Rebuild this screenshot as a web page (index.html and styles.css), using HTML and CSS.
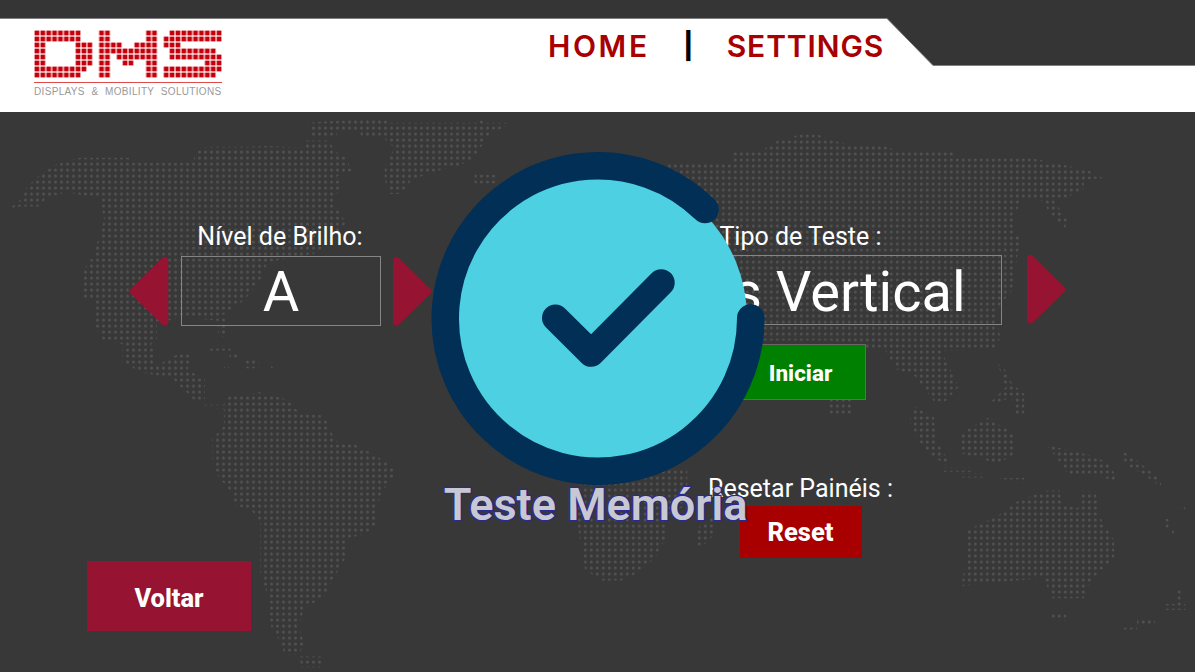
FILE: index.html
```html
<!DOCTYPE html>
<html lang="pt-BR">
<head>
  <meta charset="UTF-8">
  <title>DMS - Teste Memória</title>
  <link rel="stylesheet" href="styles.css">
</head>
<body>
  <div class="page">
    <header class="topbar">
      <!-- faixa escura com o canto cortado -->
      <svg class="topbar-cut" viewBox="0 0 1195 67" aria-hidden="true">
        <polygon class="cut-fill" points="0,0 1195,0 1195,65.5 933,65.5 887,18.5 0,18.5"/>
        <polyline class="cut-line" points="0,18.5 887,18.5 933,65.5 1195,65.5"/>
      </svg>
      <div class="logo">
        <svg class="logo-mark" viewBox="0 0 32 8" preserveAspectRatio="none" role="img" aria-label="DMS">
          <defs>
            <pattern id="cell" patternUnits="userSpaceOnUse" width="1" height="1">
              <rect x="0.1" y="0.1" width="0.8" height="0.8" fill="#c5000b"/>
            </pattern>
          </defs>
          <g fill="url(#cell)">
            <!-- D -->
            <rect x="0" y="0" width="8" height="2"/>
            <rect x="0" y="2" width="2" height="4"/>
            <rect x="7" y="2" width="3" height="4"/>
            <rect x="0" y="6" width="9" height="1"/>
            <rect x="0" y="7" width="8" height="1"/>
            <!-- M -->
            <rect x="11" y="0" width="2" height="8"/>
            <rect x="19" y="0" width="2" height="8"/>
            <rect x="13" y="2" width="2" height="1"/>
            <rect x="17" y="2" width="2" height="1"/>
            <rect x="13" y="3" width="6" height="1"/>
            <rect x="14" y="4" width="5" height="1"/>
            <rect x="15" y="5" width="2" height="1"/>
            <!-- S -->
            <rect x="23" y="0" width="9" height="1"/>
            <rect x="22" y="1" width="10" height="1"/>
            <rect x="22" y="2" width="3" height="1"/>
            <rect x="23" y="3" width="8" height="1"/>
            <rect x="23" y="4" width="9" height="1"/>
            <rect x="29" y="5" width="3" height="1"/>
            <rect x="22" y="6" width="10" height="1"/>
            <rect x="22" y="7" width="9" height="1"/>
          </g>
        </svg>
        <div class="logo-text">DISPLAYS &amp; MOBILITY SOLUTIONS</div>
      </div>
      <nav class="menu">
        <a class="menu-link menu-home">HOME</a>
        <span class="menu-sep">|</span>
        <a class="menu-link menu-settings">SETTINGS</a>
      </nav>
    </header>

    <main class="content">
      <!-- mapa de pontos do fundo -->
      <svg class="worldmap" viewBox="0 112 1195 560" aria-hidden="true">
        <defs>
          <pattern id="dots-west" patternUnits="userSpaceOnUse" width="6" height="6">
            <circle cx="1.5" cy="2" r="1.5" fill="#505050"/>
          </pattern>
          <pattern id="dots-east" patternUnits="userSpaceOnUse" width="6" height="6">
            <circle cx="3.3" cy="4" r="1.5" fill="#505050"/>
          </pattern>
          <clipPath id="land">
            <path transform="translate(0,112) scale(.3827,.357)" d="M25,270 L60,240 L70,210 L105,175 L150,145 L210,128 L345,128 L345,142 L505,142 L510,110 L540,97 L650,97 L700,95 L790,100 L800,80 L860,80 L875,110 L905,130 L920,165 L880,180 L895,210 L870,240 L880,270 L905,310 L830,395 L700,420 L680,470 L640,525 L580,570 L595,585 L595,630 L570,630 L570,585 L480,575 L410,590 L410,635 L395,650 L410,710 L470,675 L500,675 L490,725 L535,745 L535,810 L510,810 L450,745 L370,730 L320,700 L320,650 L270,640 L245,590 L250,525 L213,520 L213,450 L240,410 L262,340 L272,300 L260,240 L210,232 L175,225 L120,240 L105,265 L50,265 L25,280 Z
              M1005,15 L1015,30 L1245,30 L1255,15 L1265,30 L1325,30 L1325,40 L1280,60 L1250,110 L1230,135 L1200,150 L1140,165 L1075,190 L1050,230 L1020,230 L1005,190 L1005,160 L1030,100 L1005,75 L945,70 L940,55 L880,55 L880,70 L815,70 L805,30 Z
              M1240,175 H1295 V200 H1240 Z
              M540,655 H610 V668 H540 Z M600,675 H625 V688 H600 Z M585,705 H598 V718 H585 Z M635,690 H675 V718 H635 Z M708,705 H720 V718 H708 Z
              M600,795 L680,785 L750,805 L785,845 L845,850 L860,880 L875,920 L925,930 L970,955 L1030,995 L1030,1020 L1000,1060 L985,1100 L985,1150 L965,1180 L905,1195 L905,1245 L875,1300 L845,1360 L795,1390 L780,1440 L795,1490 L780,1520 L745,1520 L725,1470 L710,1450 L695,1340 L680,1300 L680,1150 L660,1120 L615,1100 L600,1060 L570,1020 L555,980 L555,915 L585,880 L585,832 L525,830 L525,820 L585,820 Z
              M785,1525 H845 V1555 H785 Z"/>
            <path transform="translate(600,112) scale(.3795,.357)" d="M345,112 L430,112 L440,95 L470,80 L530,62 L570,62 L630,85 L690,95 L750,95 L790,112 L930,112 L930,128 L1130,128 L1210,145 L1290,165 L1325,185 L1275,190 L1275,215 L1230,240 L1190,240 L1230,300 L1225,330 L1180,275 L1170,250 L1110,245 L1090,300 L1090,335 L1110,350 L1100,400 L1085,500 L1040,560 L1055,630 L1040,665 L900,670 L945,770 L910,810 L880,810 L830,740 L780,720 L750,665 L700,665 L610,640 L300,640 L180,300 L180,145 L345,145 Z
              M605,805 H665 V845 H605 Z
              M-50,1000 L230,1000 L230,1100 L175,1130 L175,1190 L145,1250 L100,1290 L60,1312 L0,1312 L-40,1280 L-60,1150 Z
              M250,1170 L305,1130 L305,1180 L270,1215 L250,1215 Z
              M815,865 L830,825 L880,855 L885,920 L915,970 L915,990 L870,960 L840,920 Z
              M950,900 L1030,852 L1040,870 L1090,900 L1090,960 L1050,985 L950,955 Z
              M905,995 H980 V1008 H905 Z M950,1012 H1010 V1024 H950 Z M1055,1025 H1118 V1038 H1055 Z
              M1048,708 L1060,708 L1085,760 L1118,790 L1118,845 L1095,845 L1085,800 L1050,812 L1030,812 L1070,770 Z
              M1175,932 L1240,948 L1305,965 L1340,985 L1370,1037 L1320,1022 L1235,1017 L1205,970 Z
              M1375,948 L1400,965 L1478,1030 L1478,1052 L1440,1020 L1390,990 L1375,965 Z
              M1175,1060 L1212,1060 L1215,1100 L1260,1110 L1270,1062 L1305,1062 L1320,1140 L1355,1200 L1355,1250 L1300,1305 L1285,1330 L1275,1362 L1190,1362 L1170,1305 L1000,1322 L955,1328 L955,1305 L970,1240 L970,1170 L1050,1130 L1090,1095 Z
              M1188,1402 H1228 V1425 H1188 Z
              M1375,1445 H1415 V1458 H1375 Z M1415,1420 H1462 V1440 H1415 Z M1485,1378 H1542 V1395 H1485 Z M1515,1338 H1530 V1378 H1515 Z
              M1485,1140 H1498 V1168 H1485 Z M1500,1172 H1512 V1185 H1500 Z M1530,1108 H1542 V1120 H1530 Z"/>
          </clipPath>
        </defs>
        <g clip-path="url(#land)">
          <rect x="0" y="112" width="560" height="560" fill="url(#dots-west)"/>
          <rect x="560" y="112" width="635" height="560" fill="url(#dots-east)"/>
        </g>
      </svg>

      <section class="col-left">
        <div class="field">
          <label class="field-label">Nível de Brilho:</label>
          <div class="stepper">
            <svg class="arrow" viewBox="0 0 39 69" aria-hidden="true"><polygon points="34.8,3.5 34.8,65 3.5,34.5"/></svg>
            <div class="valuebox valuebox-small">A</div>
            <svg class="arrow" viewBox="0 0 39 69" aria-hidden="true"><polygon points="3.5,3.5 3.5,65 35,34.5"/></svg>
          </div>
        </div>
        <button class="btn btn-back">Voltar</button>
      </section>

      <section class="col-right">
        <div class="stepper">
          <div class="stack">
            <label class="field-label">Tipo de Teste :</label>
            <div class="valuebox valuebox-wide">Linhas Vertical</div>
          </div>
          <svg class="arrow arrow-end" viewBox="0 0 39 69" aria-hidden="true"><polygon points="3.5,3.5 3.5,65 35,34.5"/></svg>
        </div>
        <div class="stack">
          <button class="btn btn-start">Iniciar</button>
          <label class="field-label label-reset">Resetar Painéis :</label>
          <button class="btn btn-reset">Reset</button>
        </div>
      </section>

      <!-- aviso por cima da tela -->
      <div class="overlay">
        <svg class="overlay-icon" viewBox="0 0 334 334" aria-hidden="true">
          <circle class="icon-disc" cx="167" cy="167" r="149"/>
          <path class="icon-ring" d="M319.75 167 A152.75 152.75 0 1 1 274 58.5"/>
          <polyline class="icon-check" points="124.5,167 160.2,202.3 230.2,131.7"/>
        </svg>
        <div class="overlay-title">Teste Memória</div>
      </div>
    </main>
  </div>
</body>
</html>
```

FILE: styles.css
```css
* {
  box-sizing: border-box;
}
html, body {
  margin: 0;
  height: 100%;
}
body {
  font-family: Roboto, "Liberation Sans", sans-serif;
  background-color: #383838;
  color: #fff;
  overflow: hidden;
}
.page {
  width: 1195px;
  height: 672px;
  display: flex;
  flex-direction: column;
}

/* topo */
.topbar {
  position: relative;
  height: 112px;
  flex: none;
  background: #fff;
  display: flex;
  align-items: flex-start;
  padding: 30px 0 0 34px;
}
.topbar-cut {
  position: absolute;
  left: 0;
  top: 0;
  width: 1195px;
  height: 67px;
}
.cut-fill {
  fill: #353535;
}
.cut-line {
  fill: none;
  stroke: #808080;
  stroke-width: 1;
}
.logo {
  position: relative;
  width: 188px;
}
.logo-mark {
  display: block;
  width: 188px;
  height: 48px;
}
.logo-text {
  margin-top: 4px;
  padding-top: 3px;
  border-top: 1px solid #e04a4a;
  font-family: "Liberation Sans", Arial, sans-serif;
  font-size: 10px;
  line-height: 12px;
  color: #999;
  white-space: nowrap;
  letter-spacing: 0.33px;
  word-spacing: 3.5px;
}
.menu {
  position: relative;
  margin: -2px 0 0 326px;
  display: flex;
  align-items: center;
  font-family: Inter, "Open Sans", sans-serif;
  font-size: 30px;
  line-height: 36px;
  font-weight: 600;
}
.menu-link {
  color: #a80000;
}
.menu-home {
  letter-spacing: 2.6px;
}
.menu-settings {
  letter-spacing: 0.9px;
}
.menu-sep {
  width: 77px;
  text-align: center;
  color: #000;
  font-size: 26px;
  font-weight: 800;
}

/* conteudo */
.content {
  position: relative;
  flex: 1;
  display: flex;
  padding: 110px 0 41px 87px;
}
.worldmap {
  position: absolute;
  left: 0;
  top: 0;
  width: 1195px;
  height: 560px;
}
.col-left {
  position: relative;
  width: 345px;
  display: flex;
  flex-direction: column;
  justify-content: space-between;
  align-items: flex-start;
}
.col-left .field {
  margin-left: 43px;
  width: 302px;
}
.col-right {
  position: relative;
  margin: -1px 0 0 167px;
}
.field-label {
  display: block;
  font-size: 25px;
  line-height: 28px;
  margin-bottom: 6px;
  padding-top: 1px;
  height: 28px;
  text-align: center;
}
.col-left .field-label {
  padding-right: 2px;
}
.col-right .field-label {
  padding-top: 2px;
}
.stepper {
  display: flex;
  align-items: center;
  gap: 12px;
}
.col-right .stepper {
  align-items: flex-end;
  gap: 25px;
}
.arrow {
  display: block;
  width: 39px;
  height: 69px;
  flex: none;
}
.arrow polygon {
  fill: #961331;
  stroke: #961331;
  stroke-width: 7;
  stroke-linejoin: round;
}
.arrow-end {
  margin-bottom: 1px;
}
.valuebox {
  height: 70px;
  border: 1px solid #858585;
  font-size: 56px;
  line-height: 70px;
  text-align: center;
  white-space: nowrap;
  overflow: hidden;
}
.valuebox-small {
  width: 200px;
}
.valuebox-wide {
  width: 403px;
  padding-top: 1px;
  text-align: left;
  text-indent: -3px;
}
.stack {
  width: 403px;
  display: flex;
  flex-direction: column;
  align-items: center;
}
.stack .field-label {
  align-self: stretch;
}
.btn {
  display: block;
  border: none;
  color: #fff;
  font-family: Roboto, sans-serif;
  font-size: 25.5px;
  font-weight: 800;
  padding: 3px 0 0;
  cursor: pointer;
}
.btn-back {
  width: 164px;
  height: 70px;
  background-color: #961331;
}
.btn-start {
  margin-top: 19px;
  width: 131px;
  height: 56px;
  padding-top: 1px;
  font-size: 22.5px;
  background-color: #008000;
  border: 1px solid #666;
}
.col-right .label-reset {
  margin: 73px 0 5px;
}
.btn-reset {
  width: 122px;
  height: 52px;
  padding-top: 0;
  background-color: #a80000;
}

/* aviso */
.overlay {
  position: absolute;
  left: 400px;
  top: 39px;
  width: 395px;
  display: flex;
  flex-direction: column;
  align-items: center;
}
.overlay-icon {
  display: block;
  width: 334px;
  height: 334px;
}
.icon-disc {
  fill: #4dd0e1;
}
.icon-ring,
.icon-check {
  fill: none;
  stroke: #012f55;
  stroke-linecap: round;
  stroke-linejoin: round;
}
.icon-ring {
  stroke-width: 27.5;
}
.icon-check {
  stroke-width: 27;
}
.overlay-title {
  margin: -5px 4px 0 0;
  font-size: 45px;
  line-height: 50px;
  font-weight: 600;
  white-space: nowrap;
  color: #c8c8d2;
  -webkit-text-stroke: 2.5px #2b2a8c;
  paint-order: stroke fill;
}
```
